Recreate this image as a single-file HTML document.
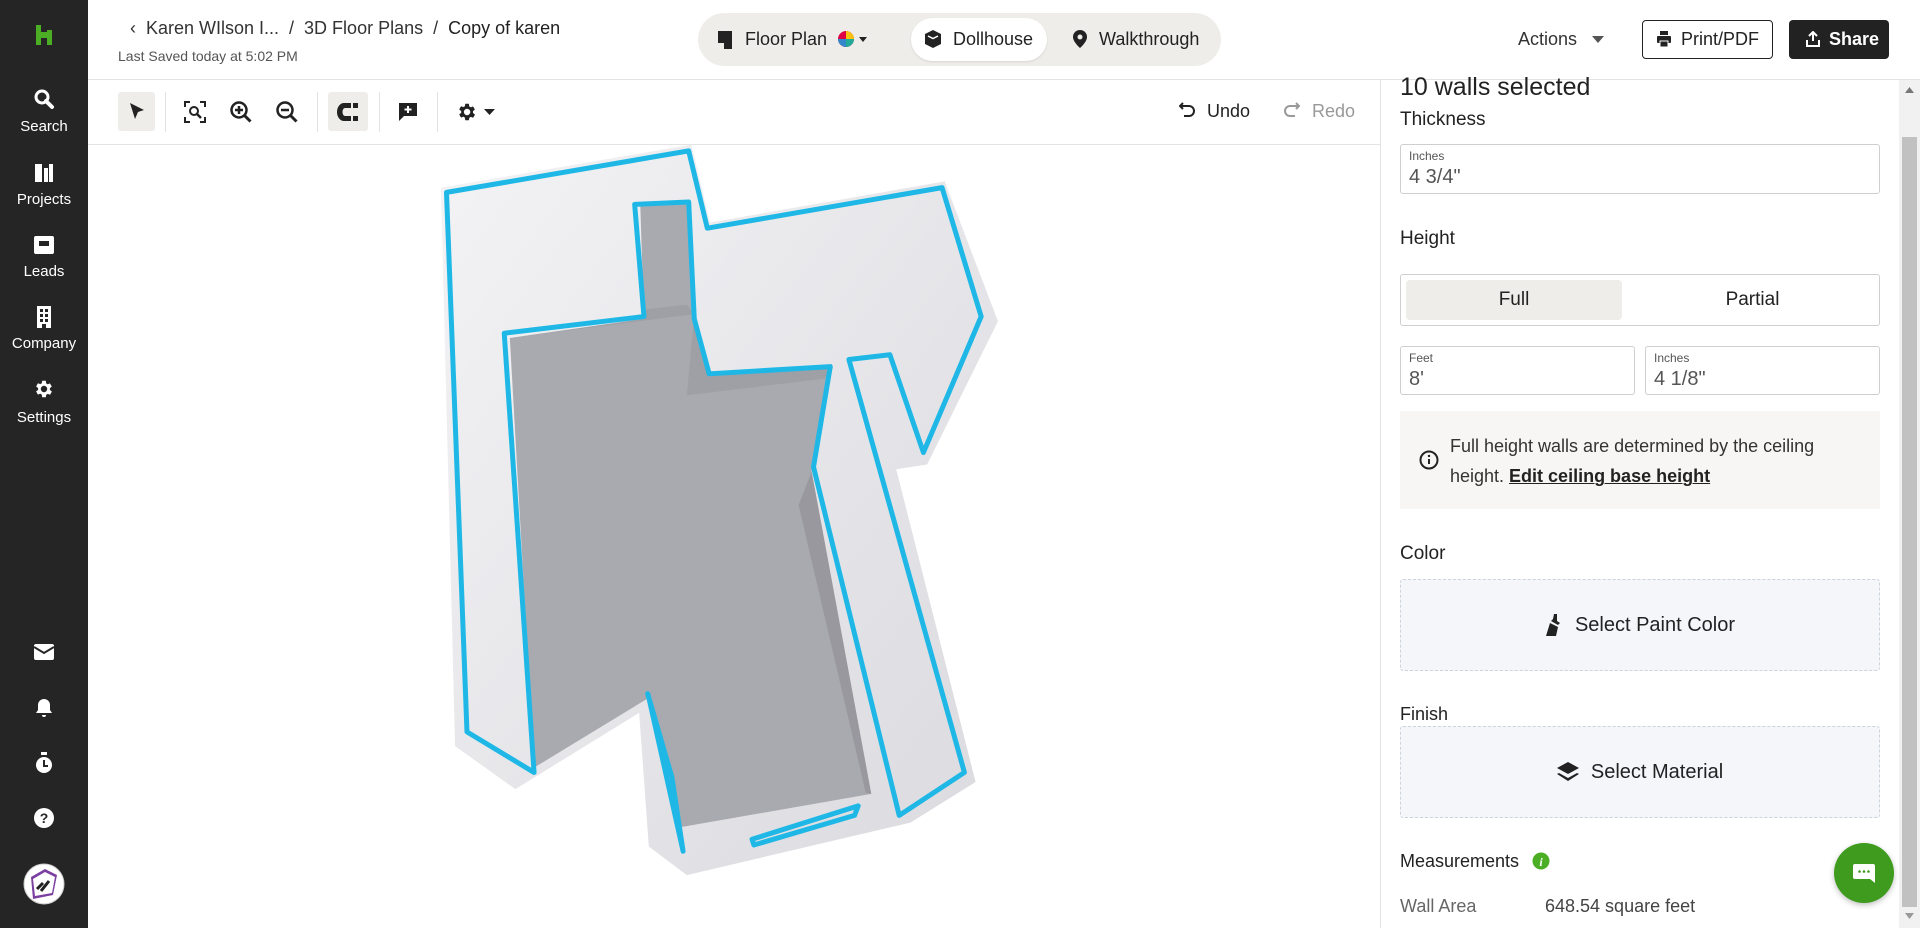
<!DOCTYPE html>
<html><head><meta charset="utf-8">
<style>
*{box-sizing:border-box;margin:0;padding:0}
body{width:1920px;height:928px;overflow:hidden;background:#fff;font-family:"Liberation Sans",sans-serif;color:#222;position:relative}
.abs{position:absolute}
.side{left:0;top:0;width:88px;height:928px;background:#252525}
.side .it{position:absolute;left:0;width:88px;text-align:center;color:#fff;font-size:15px}
.hdr{left:88px;top:0;width:1832px;height:80px;border-bottom:1px solid #e3e3e3}
.tb{left:88px;top:80px;width:1292px;height:65px;border-bottom:1px solid #e3e3e3}
.sep{position:absolute;top:92px;width:1px;height:40px;background:#e3e3e3}
.panel{left:1380px;top:80px;width:519px;height:848px;border-left:1px solid #e3e3e3}
.inp{position:absolute;border:1px solid #cfcfcf;border-radius:3px;background:#fff}
.inp .l{position:absolute;left:8px;top:4px;font-size:12px;color:#555}
.inp .v{position:absolute;left:8px;top:21px;font-size:20px;color:#555}
.lbl{position:absolute;left:1400px;font-size:19px;color:#222}
.dash{position:absolute;left:1400px;width:480px;border:1px dashed #cdd3dc;border-radius:3px;background:#f4f6fa;display:flex;align-items:center;justify-content:center;font-size:20px;gap:12px}
</style></head><body>

<div class="abs side">
  <svg class="abs" style="left:34px;top:25px" width="20" height="20" viewBox="0 0 20 20"><path d="M2 0h5v7h6V5h5v15h-5v-7H7v7H2z" fill="#4bae25"/></svg>
  <div class="it" style="top:88px"><svg width="22" height="22" viewBox="0 0 22 22"><circle cx="9" cy="9" r="6" fill="none" stroke="#fff" stroke-width="3"/><path d="M13 13l6 6" stroke="#fff" stroke-width="4" stroke-linecap="round"/></svg></div>
  <div class="it" style="top:118px">Search</div>
  <div class="it" style="top:162px"><svg width="22" height="22" viewBox="0 0 22 22"><path d="M2 2h7v18H2zM11 6h4v14h-4zM16 2h4v18h-4z" fill="#fff"/></svg></div>
  <div class="it" style="top:191px">Projects</div>
  <div class="it" style="top:235px"><svg width="22" height="20" viewBox="0 0 22 20"><rect x="1" y="1" width="20" height="18" rx="2" fill="#fff"/><rect x="6" y="6" width="10" height="5" fill="#252525"/></svg></div>
  <div class="it" style="top:263px">Leads</div>
  <div class="it" style="top:306px"><svg width="18" height="22" viewBox="0 0 18 22"><path d="M2 0h14v22H2z" fill="#fff"/><path d="M5 3h3v3H5zM10 3h3v3h-3zM5 8h3v3H5zM10 8h3v3h-3zM5 13h3v3H5zM10 13h3v3h-3zM7 18h4v4H7z" fill="#252525"/></svg></div>
  <div class="it" style="top:335px">Company</div>
  <div class="it" style="top:378px"><svg width="22" height="22" viewBox="0 0 24 24"><path fill="#fff" d="M19.4 13a7.5 7.5 0 000-2l2.1-1.6-2-3.5-2.5 1a7 7 0 00-1.7-1L15 3h-4l-.4 2.7a7 7 0 00-1.7 1l-2.5-1-2 3.5L6.6 11a7.5 7.5 0 000 2l-2.2 1.6 2 3.5 2.5-1a7 7 0 001.7 1L11 21h4l.4-2.7a7 7 0 001.7-1l2.5 1 2-3.5zM13 15.5a3.5 3.5 0 110-7 3.5 3.5 0 010 7z" transform="translate(-1 0)"/></svg></div>
  <div class="it" style="top:409px">Settings</div>
  <div class="it" style="top:644px"><svg width="20" height="16" viewBox="0 0 20 16"><rect width="20" height="16" rx="2" fill="#fff"/><path d="M0 3l10 6 10-6" stroke="#252525" stroke-width="2" fill="none"/></svg></div>
  <div class="it" style="top:698px"><svg width="20" height="20" viewBox="0 0 20 20"><path d="M10 1a6 6 0 016 6v5l2 3H2l2-3V7a6 6 0 016-6zM8 17h4a2 2 0 01-4 0z" fill="#fff"/></svg></div>
  <div class="it" style="top:752px"><svg width="20" height="22" viewBox="0 0 20 22"><rect x="7" y="0" width="6" height="3" fill="#fff"/><circle cx="10" cy="13" r="8" fill="#fff"/><path d="M10 8v6h4" stroke="#252525" stroke-width="2" fill="none"/></svg></div>
  <div class="it" style="top:807px"><svg width="22" height="22" viewBox="0 0 22 22"><circle cx="11" cy="11" r="10" fill="#fff"/><text x="11" y="16" text-anchor="middle" font-size="14" font-weight="bold" fill="#252525" font-family="Liberation Sans">?</text></svg></div>
  <svg class="abs" style="left:23px;top:863px" width="42" height="42" viewBox="0 0 42 42"><circle cx="21" cy="21" r="20" fill="#fff" stroke="#ccc"/><path d="M8 14l14-8 12 6-4 20-20 4z" fill="#7a3fa0"/><path d="M10 16l12-7 10 5-3 16-17 3z" fill="#fff"/><path d="M14 26l6-6M18 28l8-10" stroke="#222" stroke-width="3"/></svg>
</div>

<div class="abs hdr"></div>
<div class="abs" style="left:130px;top:18px;font-size:18px;color:#333;white-space:nowrap">‹&nbsp; Karen WIlson I... &nbsp;/&nbsp; 3D Floor Plans &nbsp;/&nbsp; <span style="color:#222">Copy of karen</span></div>
<div class="abs" style="left:118px;top:48px;font-size:14px;color:#555">Last Saved today at 5:02 PM</div>

<div class="abs" style="left:698px;top:13px;width:523px;height:53px;border-radius:27px;background:#efedea"></div>
<div class="abs" style="left:911px;top:18px;width:136px;height:43px;border-radius:22px;background:#fff;box-shadow:0 1px 2px rgba(0,0,0,.1)"></div>
<svg class="abs" style="left:718px;top:31px" width="14" height="18" viewBox="0 0 14 18"><path d="M0 0h14v18H6v-6H0z" fill="#222"/></svg>
<div class="abs" style="left:745px;top:29px;font-size:18px">Floor Plan</div>
<svg class="abs" style="left:837px;top:30px" width="36" height="18" viewBox="0 0 36 18"><circle cx="9" cy="9" r="8" fill="#d04"/><path d="M9 9V1a8 8 0 018 8z" fill="#f9c20f"/><path d="M9 9h8a8 8 0 01-8 8z" fill="#2a9"/><path d="M9 9v8a8 8 0 01-8-8z" fill="#38c"/><path d="M22 7h8l-4 5z" fill="#222"/></svg>
<svg class="abs" style="left:925px;top:30px" width="16" height="18" viewBox="0 0 16 18"><path d="M8 0l8 4v10l-8 4-8-4V4z" fill="#222"/><path d="M3 6l5 2.5L13 6" stroke="#fff" stroke-width="1.5" fill="none"/></svg>
<div class="abs" style="left:953px;top:29px;font-size:18px">Dollhouse</div>
<svg class="abs" style="left:1073px;top:30px" width="14" height="18" viewBox="0 0 14 18"><path d="M7 0a7 7 0 017 7c0 5-7 11-7 11S0 12 0 7a7 7 0 017-7z" fill="#222"/><circle cx="7" cy="7" r="2.5" fill="#efedea"/></svg>
<div class="abs" style="left:1099px;top:29px;font-size:18px">Walkthrough</div>

<div class="abs" style="left:1518px;top:29px;font-size:18px;color:#333">Actions</div>
<svg class="abs" style="left:1592px;top:36px" width="12" height="8"><path d="M0 0h12L6 7z" fill="#555"/></svg>
<div class="abs" style="left:1642px;top:20px;width:131px;height:39px;border:1px solid #222;border-radius:4px"></div>
<svg class="abs" style="left:1657px;top:31px" width="14" height="16" viewBox="0 0 14 16"><rect x="3" y="0" width="8" height="4" fill="#222"/><rect x="0" y="5" width="14" height="7" rx="1" fill="#222"/><rect x="3" y="10" width="8" height="6" fill="#222" stroke="#fff"/></svg>
<div class="abs" style="left:1681px;top:29px;font-size:18px">Print/PDF</div>
<div class="abs" style="left:1789px;top:20px;width:100px;height:39px;background:#222;border-radius:4px"></div>
<svg class="abs" style="left:1806px;top:31px" width="14" height="16" viewBox="0 0 14 16"><path d="M7 1v9M3 5l4-4 4 4M1 9v6h12V9" stroke="#fff" stroke-width="2" fill="none"/></svg>
<div class="abs" style="left:1829px;top:29px;font-size:18px;color:#fff;font-weight:bold">Share</div>

<div class="abs tb"></div>
<div class="abs" style="left:118px;top:92px;width:37px;height:39px;background:#efedea;border-radius:3px"></div>
<svg class="abs" style="left:128px;top:102px" width="18" height="20" viewBox="0 0 18 20"><path d="M2 1l14 7-6 2-3 7z" fill="#222"/></svg>
<div class="sep" style="left:165px"></div>
<svg class="abs" style="left:184px;top:101px" width="22" height="22" viewBox="0 0 22 22"><path d="M1 6V1h5M16 1h5v5M21 16v5h-5M6 21H1v-5" stroke="#222" stroke-width="2" fill="none"/><circle cx="10" cy="10" r="4" fill="none" stroke="#222" stroke-width="2"/><path d="M13 13l4 4" stroke="#222" stroke-width="2.5"/></svg>
<svg class="abs" style="left:230px;top:101px" width="22" height="22" viewBox="0 0 22 22"><circle cx="9" cy="9" r="7.5" fill="none" stroke="#222" stroke-width="2.5"/><path d="M14.5 14.5l6 6" stroke="#222" stroke-width="3"/><path d="M9 5v8M5 9h8" stroke="#222" stroke-width="2.5"/></svg>
<svg class="abs" style="left:276px;top:101px" width="22" height="22" viewBox="0 0 22 22"><circle cx="9" cy="9" r="7.5" fill="none" stroke="#222" stroke-width="2.5"/><path d="M14.5 14.5l6 6" stroke="#222" stroke-width="3"/><path d="M5 9h8" stroke="#222" stroke-width="2.5"/></svg>
<div class="sep" style="left:317px"></div>
<div class="abs" style="left:328px;top:92px;width:40px;height:39px;background:#efedea;border-radius:3px"></div>
<svg class="abs" style="left:337px;top:103px" width="22" height="18" viewBox="0 0 22 18"><path d="M14 0H7a7 9 0 000 18h7v-5H8a2.5 4 0 010-8h6z" fill="#222"/><rect x="16" y="0" width="5" height="5" fill="#222"/><rect x="16" y="13" width="5" height="5" fill="#222"/></svg>
<div class="sep" style="left:379px"></div>
<svg class="abs" style="left:399px;top:103px" width="18" height="18" viewBox="0 0 18 18"><path d="M0 0h18v13H5l-5 5z" fill="#222"/><path d="M9 3v7M5.5 6.5h7" stroke="#fff" stroke-width="2"/></svg>
<div class="sep" style="left:437px"></div>
<svg class="abs" style="left:457px;top:101px" width="22" height="22" viewBox="0 0 24 24"><path fill="#222" d="M19.4 13a7.5 7.5 0 000-2l2.1-1.6-2-3.5-2.5 1a7 7 0 00-1.7-1L15 3h-4l-.4 2.7a7 7 0 00-1.7 1l-2.5-1-2 3.5L6.6 11a7.5 7.5 0 000 2l-2.2 1.6 2 3.5 2.5-1a7 7 0 001.7 1L11 21h4l.4-2.7a7 7 0 001.7-1l2.5 1 2-3.5zM13 15.5a3.5 3.5 0 110-7 3.5 3.5 0 010 7z" transform="translate(-2 0)"/></svg>
<svg class="abs" style="left:484px;top:109px" width="11" height="7"><path d="M0 0h11L5.5 6z" fill="#222"/></svg>
<svg class="abs" style="left:1179px;top:102px" width="16" height="16" viewBox="0 0 16 16"><path d="M4 1L1 4l3 3M1 4h9a5 5 0 010 10H5" stroke="#222" stroke-width="2" fill="none"/></svg>
<div class="abs" style="left:1207px;top:101px;font-size:18px">Undo</div>
<svg class="abs" style="left:1284px;top:102px" width="16" height="16" viewBox="0 0 16 16"><path d="M12 1l3 3-3 3M15 4H6a5 5 0 000 10h5" stroke="#999" stroke-width="2" fill="none"/></svg>
<div class="abs" style="left:1312px;top:101px;font-size:18px;color:#999">Redo</div>

<svg class="abs" style="left:0;top:0" width="1380" height="928">
<defs><linearGradient id="w" x1="0" y1="0" x2="1" y2="1"><stop offset="0" stop-color="#f3f3f5"/><stop offset="1" stop-color="#dadadf"/></linearGradient></defs>
<g transform="translate(426 137.5) scale(0.3726 0.4774)">
<polygon points="40,105 712,15 762,178 1392,92 1535,385 1345,685 1262,695 1475,1350 1300,1435 700,1545 598,1485 572,1205 240,1365 78,1275" fill="url(#w)"/>
<polygon points="225,420 585,380 575,140 700,135 720,370 760,500 1090,475 1035,700 1195,1375 680,1445 595,1175 290,1320" fill="#a9aab0"/>
<polygon points="225,420 585,380 590,360 700,350 720,370 700,540 1070,505 1090,475 760,500 720,370" fill="#9a9ba1" opacity=".7"/>
<polygon points="1035,700 1000,770 1180,1372 1195,1375" fill="#98989e"/>
<g fill="none" stroke="#1fb8e6" stroke-width="5" vector-effect="non-scaling-stroke" stroke-linejoin="round" stroke-linecap="round">
<polyline vector-effect="non-scaling-stroke" points="55,115 705,28 755,190 1385,105 1490,375 1335,660 1245,455 1135,465 1445,1330 1270,1420 1040,690 1085,480 760,495 720,380 705,135 560,140 585,375 210,410 290,1330 110,1245 55,115"/>
<polyline vector-effect="non-scaling-stroke" points="595,1165 660,1340 690,1495 600,1180 595,1165"/>
<polyline vector-effect="non-scaling-stroke" points="875,1470 1160,1400 1150,1420 880,1482 875,1470"/>
</g>
</g>
</svg>

<div class="abs panel"></div>
<div class="abs" style="left:1400px;top:73px;font-size:25px;color:#222">10 walls selected</div>
<div class="lbl" style="top:109px">Thickness</div>
<div class="inp" style="left:1400px;top:144px;width:480px;height:50px"><div class="l">Inches</div><div class="v">4 3/4"</div></div>
<div class="lbl" style="top:228px">Height</div>
<div class="inp" style="left:1400px;top:274px;width:480px;height:52px"></div>
<div class="abs" style="left:1406px;top:280px;width:216px;height:40px;background:#efedea;border-radius:4px;text-align:center;line-height:40px;font-size:19px">Full</div>
<div class="abs" style="left:1640px;top:280px;width:225px;height:40px;text-align:center;line-height:40px;font-size:19px">Partial</div>
<div class="inp" style="left:1400px;top:346px;width:235px;height:49px"><div class="l">Feet</div><div class="v">8'</div></div>
<div class="inp" style="left:1645px;top:346px;width:235px;height:49px"><div class="l">Inches</div><div class="v">4 1/8"</div></div>
<div class="abs" style="left:1400px;top:411px;width:480px;height:98px;background:#f7f6f4"></div>
<svg class="abs" style="left:1419px;top:450px" width="20" height="20" viewBox="0 0 20 20"><circle cx="10" cy="10" r="8.5" fill="none" stroke="#222" stroke-width="2"/><path d="M10 9v5" stroke="#222" stroke-width="2"/><circle cx="10" cy="6" r="1.2" fill="#222"/></svg>
<div class="abs" style="left:1450px;top:431px;font-size:18px;line-height:30px;color:#333;width:385px">Full height walls are determined by the ceiling height. <u style="color:#222;font-weight:bold;text-decoration-thickness:1px">Edit ceiling base height</u></div>
<div class="lbl" style="top:543px">Color</div>
<div class="dash" style="top:579px;height:92px"><svg width="18" height="22" viewBox="0 0 18 22"><path d="M9 0h3v7l3 2-2 2-7-4 2-2z" fill="#222"/><path d="M5 9l8 4-2 9H1z" fill="#222"/></svg><span>Select Paint Color</span></div>
<div class="lbl" style="top:704px;font-size:18px">Finish</div>
<div class="dash" style="top:726px;height:92px"><svg width="22" height="20" viewBox="0 0 22 20"><path d="M11 0l11 6-11 6L0 6z" fill="#222"/><path d="M2 11l9 5 9-5 2 1-11 7L0 12z" fill="#222"/></svg><span>Select Material</span></div>
<div class="lbl" style="top:851px;font-size:18px">Measurements</div>
<svg class="abs" style="left:1532px;top:852px" width="18" height="18"><circle cx="9" cy="9" r="8.5" fill="#4bae25"/><text x="9" y="14" text-anchor="middle" fill="#fff" font-size="12" font-style="italic" font-weight="bold" font-family="Liberation Serif">i</text></svg>
<div class="abs" style="left:1400px;top:896px;font-size:18px;color:#666">Wall Area</div>
<div class="abs" style="left:1545px;top:896px;font-size:18px;color:#444">648.54 square feet</div>

<div class="abs" style="left:1834px;top:843px;width:60px;height:60px;border-radius:50%;background:#3e9b1e;box-shadow:0 2px 6px rgba(0,0,0,.25)"></div>
<svg class="abs" style="left:1853px;top:864px" width="22" height="19" viewBox="0 0 22 19"><path d="M2 0h18a2 2 0 012 2v12l0 5-5-4H2a2 2 0 01-2-2V2a2 2 0 012-2z" fill="#fff"/><circle cx="6.5" cy="7.5" r="1.3" fill="#3e9b1e"/><circle cx="11" cy="7.5" r="1.3" fill="#3e9b1e"/><circle cx="15.5" cy="7.5" r="1.3" fill="#3e9b1e"/></svg>

<div class="abs" style="left:1899px;top:80px;width:21px;height:848px;background:#f1f1f1"></div>
<div class="abs" style="left:1902px;top:137px;width:15px;height:770px;background:#c1c1c1"></div>
<svg class="abs" style="left:1905px;top:87px" width="9" height="6"><path d="M0 6h9L4.5 0z" fill="#777"/></svg>
<svg class="abs" style="left:1905px;top:913px" width="9" height="6"><path d="M0 0h9L4.5 6z" fill="#999"/></svg>
</body></html>
